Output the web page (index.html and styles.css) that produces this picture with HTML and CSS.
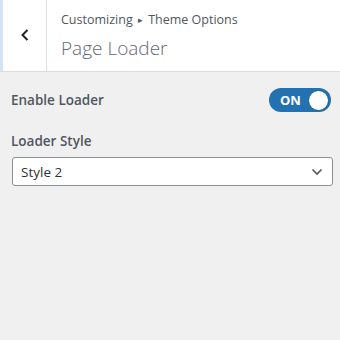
FILE: index.html
```html
<!DOCTYPE html>
<html lang="en">
<head>
  <meta charset="UTF-8">
  <title>Page Loader</title>
  <link rel="stylesheet" href="styles.css">
</head>
<body>

<div class="section-header">
  <button class="back-button" aria-label="Back">
    <svg width="14" height="14" viewBox="0 0 14 14"><path d="M9.5 2 4.5 7 9.5 12" fill="none" stroke="#1d2327" stroke-width="2"/></svg>
  </button>
  <div class="section-title">
    <span class="breadcrumb">Customizing <span class="sep">&#9656;</span> Theme Options</span>
    <h3>Page Loader</h3>
  </div>
</div>

<div class="controls">
  <div class="control control-toggle">
    <span class="control-label">Enable Loader</span>
    <label class="switch">
      <span class="switch-text">ON</span>
      <span class="switch-knob"></span>
    </label>
  </div>

  <div class="control">
    <span class="control-label">Loader Style</span>
    <div class="select">
      <span>Style 2</span>
      <svg width="12" height="8" viewBox="0 0 12 8"><path d="M1.5 1.5 6 6 10.5 1.5" fill="none" stroke="#50575e" stroke-width="1.6"/></svg>
    </div>
  </div>
</div>

</body>
</html>
```

FILE: styles.css
```css
* {box-sizing: border-box;}
body {
  margin: 0;
  background: #f0f0f1;
  font-family: "Open Sans", "Noto Sans", sans-serif;
  color: #50575e;
}

/* Header with back button */
.section-header {
  display: flex;
  height: 72px;
  background: #fff;
  border-bottom: 1px solid #dcdcde;
  border-left: 3px solid #d4e4f1;
}

.back-button {
  width: 44px;
  border: none;
  border-right: 1px solid #dcdcde;
  background: #fff;
  display: flex;
  align-items: center;
  justify-content: center;
  padding: 0 0 2px 0;
}

.section-title {
  padding: 11px 0 0 14px;
}

.breadcrumb {
  display: block;
  font-size: 12.5px;
  line-height: 18px;
  color: #50575e;
}

.breadcrumb .sep {font-size: 9px; vertical-align: 1px; margin: 0 2px;}

.section-title h3 {
  margin: 6px 0 0;
  font-size: 19px;
  font-weight: 300;
  line-height: 26px;
  color: #646970;
}

/* Controls */
.controls {padding: 16px 9px 0 12px;}

.control {margin-bottom: 13px;}

.control-toggle {
  display: flex;
  align-items: center;
  justify-content: space-between;
  margin-bottom: 20px;
}

.control-label {
  display: block;
  font-size: 13.5px;
  font-weight: 600;
  color: #50575e;
  margin-left: -1px;
}

.control .control-label + .select {margin-top: 7px;}

.switch {
  display: flex;
  align-items: center;
  justify-content: space-between;
  width: 62px;
  height: 24px;
  padding: 0 2px 0 11px;
  background: #2271b1;
  border-radius: 12px;
}

.switch-text {
  color: #fff;
  font-size: 13px;
  font-weight: 700;
}

.switch-knob {
  width: 21px;
  height: 21px;
  border-radius: 50%;
  background: #fff;
  border: 1px solid #135e96;
}

.select {
  display: flex;
  align-items: center;
  justify-content: space-between;
  height: 29px;
  width: 321px;
  padding: 0 9px 0 8px;
  background: #fff;
  border: 1px solid #8c8f94;
  border-radius: 3px;
  font-size: 13.5px;
  color: #2c3338;
}
```
